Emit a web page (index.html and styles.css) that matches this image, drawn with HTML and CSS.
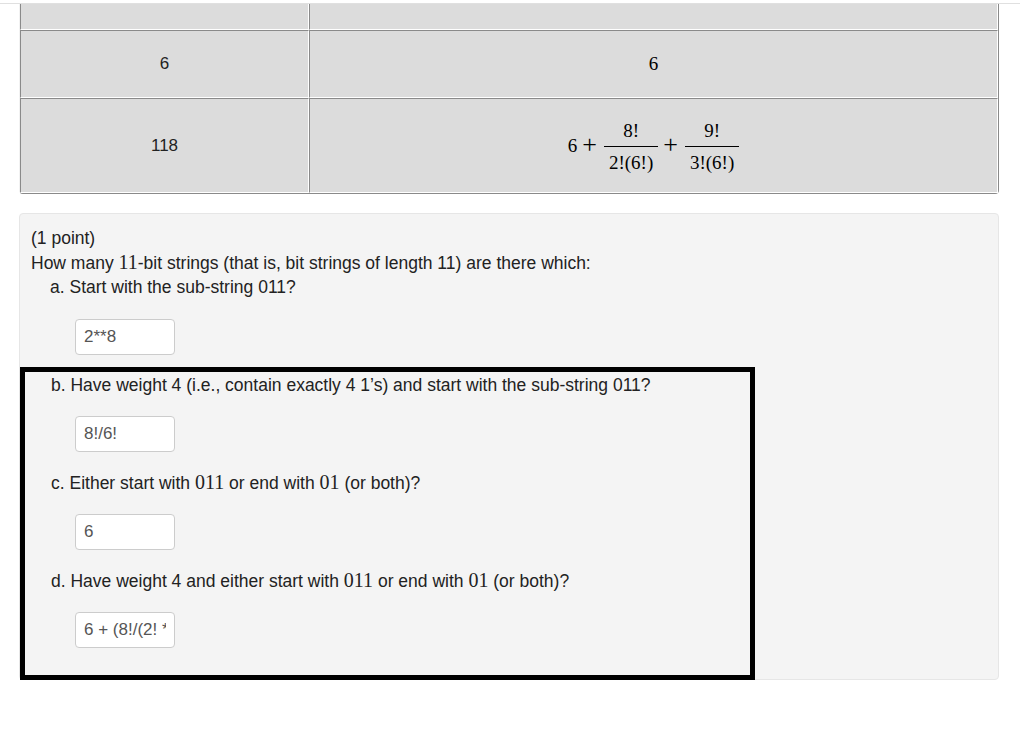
FILE: index.html
```html
<!DOCTYPE html>
<html lang="en">
<head>
    <meta charset="UTF-8">
    <meta name="viewport" content="width=device-width, initial-scale=1.0">
    <title>Bit strings</title>
    <link rel="stylesheet" href="styles.css">
</head>
<body>
    <div class="top-rule"></div>

    <table class="results">
        <colgroup>
            <col class="col-left">
            <col>
        </colgroup>
        <tr class="row-cut">
            <td></td>
            <td></td>
        </tr>
        <tr class="row-short">
            <td>6</td>
            <td class="math">6</td>
        </tr>
        <tr class="row-tall">
            <td>118</td>
            <td class="math">
                <span class="formula">
                    <span>6</span>
                    <span class="op">+</span>
                    <span class="frac"><span class="num">8!</span><span class="den">2!(6!)</span></span>
                    <span class="op">+</span>
                    <span class="frac"><span class="num">9!</span><span class="den">3!(6!)</span></span>
                </span>
            </td>
        </tr>
    </table>

    <div class="problem">
        <div class="intro">
            <div>(1 point)</div>
            <div>How many <span class="m">11</span>-bit strings (that is, bit strings of length 11) are there which:</div>
            <div class="part-q">a. Start with the sub-string 011?</div>
            <div class="answer"><input type="text" value="2**8"></div>
        </div>

        <div class="highlight">
            <div class="part-q">b. Have weight 4 (i.e., contain exactly 4 1’s) and start with the sub-string 011?</div>
            <div class="answer"><input type="text" value="8!/6!"></div>

            <div class="part-q">c. Either start with <span class="m">011</span> or end with <span class="m">01</span> (or both)?</div>
            <div class="answer"><input type="text" value="6"></div>

            <div class="part-q">d. Have weight 4 and either start with <span class="m">011</span> or end with <span class="m">01</span> (or both)?</div>
            <div class="answer"><input type="text" value="6 + (8!/(2! * 6!)) + (9!/(3! * 6!))"></div>
        </div>
    </div>
</body>
</html>
```

FILE: styles.css
```css
body {
    margin: 0;
    font-family: "Liberation Sans", Arial, sans-serif;
    font-size: 17.5px;
    line-height: 24px;
    color: #222;
    background: #fff;
}

.top-rule {
    height: 3px;
    border-bottom: 1px solid #e0e0e0;
}

/* answer table */
.results {
    margin-left: 19px;
    width: 980px;
    table-layout: fixed;
    border-collapse: separate;
    border-spacing: 0;
    border: 1px solid;
    border-top: 0;
    border-color: #fff #8a8a8a #8a8a8a #f2f2f2;
    border-radius: 0 0 4px 4px;
    background: #dcdcdc;
    font-size: 17px;
}

.col-left {
    width: 289px;
}

.results td {
    padding: 0;
    text-align: center;
    vertical-align: middle;
    border: 1px solid;
    border-color: #8a8a8a #fff #fff #8a8a8a;
}

.row-cut td {
    height: 25px;
    border-top: 0;
}

.row-short td {
    height: 66px;
}

.row-tall td {
    height: 93px;
}

.math {
    font-family: "Liberation Serif", "Times New Roman", serif;
    font-size: 19px;
    color: #000;
}

.formula {
    display: inline-flex;
    align-items: center;
}

.op {
    font-size: 26px;
    margin: 0 7px 2px 5px;
}

.frac {
    display: inline-flex;
    flex-direction: column;
    text-align: center;
    line-height: 25px;
    margin-top: 2px;
}

.frac .num {
    border-bottom: 1px solid #000;
    padding: 0 5px 3px;
}

.frac .den {
    padding: 3px 5px 0;
}

/* problem panel */
.problem {
    margin: 19px 0 0 19px;
    width: 978px;
    background: #f4f4f4;
    border: 1px solid #e6e6e6;
    border-radius: 4px;
    padding-top: 12px;
}

.intro {
    padding: 0 11px;
}

.intro .part-q {
    padding-left: 19px;
}

.intro .answer {
    padding-left: 44px;
    margin: 20px 0 12px;
}

.m {
    font-family: "Liberation Serif", "Times New Roman", serif;
    font-size: 20px;
}

.highlight {
    width: 725px;
    margin-bottom: -1px;
    border: 5px solid #000;
    padding: 1px 0 9px;
}

.highlight .part-q {
    padding-left: 26px;
}

.highlight .answer {
    padding-left: 50px;
    margin: 19px 0 18px;
}

input {
    display: block;
    box-sizing: border-box;
    width: 100px;
    height: 36px;
    padding: 6px 8px;
    border: 1px solid #ccc;
    border-radius: 4px;
    background: #fff;
    font-family: "Liberation Sans", Arial, sans-serif;
    font-size: 17px;
    color: #555;
}
```
